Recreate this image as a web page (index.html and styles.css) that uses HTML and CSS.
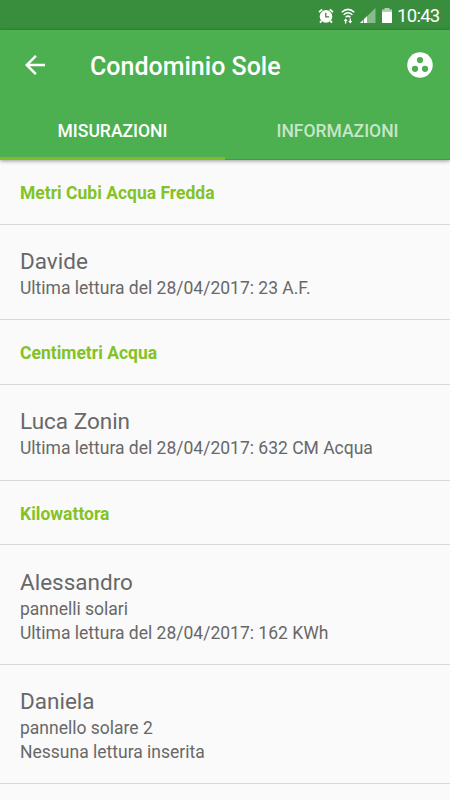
FILE: index.html
```html
<!DOCTYPE html>
<html lang="it">
<head>
    <meta charset="UTF-8">
    <meta name="viewport" content="width=device-width, initial-scale=1.0">
    <title>Condominio Sole</title>
    <link rel="stylesheet" href="styles.css">
</head>
<body>

<!-- Status bar -->
<div class="status-bar">
    <svg class="alarm" width="16" height="16" viewBox="0 0 16 16">
        <circle cx="8" cy="8.4" r="6.3" fill="#fff"/>
        <path d="M1 4.2 4.2 1.3M11.8 1.3 15 4.2M3.6 12.8 2 14.6M12.4 12.8 14 14.6" stroke="#fff" stroke-width="1.8"/>
        <path d="M7.8 4.8v4h3.4" fill="none" stroke="#388e3c" stroke-width="1.3"/>
    </svg>
    <svg class="wifi" width="14" height="16" viewBox="0 0 14 16">
        <g fill="none" stroke="#fff" stroke-width="1.5">
            <path d="M.7 4.2q6.3-5.6 12.6 0"/>
            <path d="M2.6 6.8q4.4-4 8.8 0"/>
            <path d="M4.6 9.2q2.4-2.2 4.8 0"/>
        </g>
        <path d="M4.6 10.6 6.7 13H5.3v2.4H3.9V13H2.6zM9.3 15.4 7.2 13h1.4v-2.4H10V13h1.4z" fill="#fff"/>
    </svg>
    <svg class="signal" width="16" height="15" viewBox="0 0 16 15">
        <path d="M0 15 15.5 0v15z" fill="#fff" opacity=".4"/>
        <path d="M0 15 7 8.2V15z" fill="#fff"/>
        <path d="M3.4 10v5" stroke="#388e3c" stroke-width=".8"/>
    </svg>
    <svg class="battery" width="10" height="15" viewBox="0 0 10 15">
        <path d="M2.5 0h5v1.5H10V15H0V1.5h2.5z" fill="#fff" opacity=".6"/>
        <path d="M0 4h10v11H0z" fill="#fff"/>
    </svg>
    <span class="clock">10:43</span>
</div>

<!-- Toolbar and tabs -->
<header class="app-bar">
    <div class="toolbar">
        <svg class="back" width="30" height="30" viewBox="0 0 24 24">
            <path d="M20 11H7.83l5.59-5.59L12 4l-8 8 8 8 1.41-1.41L7.83 13H20v-2z" fill="#fff"/>
        </svg>
        <h1>Condominio Sole</h1>
        <svg class="group" width="30" height="30" viewBox="0 0 24 24">
            <circle cx="12" cy="12" r="10.2" fill="#fff"/>
            <g fill="#4caf50">
                <circle cx="12" cy="8" r="2.5"/>
                <circle cx="8" cy="15" r="2.5"/>
                <circle cx="16" cy="15" r="2.5"/>
            </g>
        </svg>
    </div>
    <nav class="tabs">
        <a class="tab active">MISURAZIONI</a>
        <a class="tab">INFORMAZIONI</a>
    </nav>
</header>

<!-- Readings -->
<main class="list">
    <h2>Metri Cubi Acqua Fredda</h2>
    <div class="item">
        <h3>Davide</h3>
        <p>Ultima lettura del 28/04/2017: 23 A.F.</p>
    </div>
    <h2>Centimetri Acqua</h2>
    <div class="item">
        <h3>Luca Zonin</h3>
        <p>Ultima lettura del 28/04/2017: 632 CM Acqua</p>
    </div>
    <h2>Kilowattora</h2>
    <div class="item">
        <h3>Alessandro</h3>
        <p>pannelli solari</p>
        <p>Ultima lettura del 28/04/2017: 162 KWh</p>
    </div>
    <div class="item">
        <h3>Daniela</h3>
        <p>pannello solare 2</p>
        <p>Nessuna lettura inserita</p>
    </div>
</main>

</body>
</html>
```
FILE: styles.css
```css
* {
    box-sizing: border-box;
}

body {
    margin: 0;
    height: 800px;
    overflow: hidden;
    font-family: Roboto, "Liberation Sans", sans-serif;
    background-color: #fafafa;
    color: #686868;
}

h1, h2, h3, p {
    margin: 0;
}

/* Status bar */
.status-bar {
    display: flex;
    align-items: center;
    justify-content: flex-end;
    height: 30px;
    padding: 1px 10px 0 0;
    background-color: #388e3c;
    color: #fff;
}

.wifi {
    margin-left: 7px;
}

.signal {
    margin-left: 5px;
}

.battery {
    margin-left: 6px;
}

.clock {
    width: 43px;
    margin-left: 5px;
    font-size: 18.5px;
    line-height: 28px;
    letter-spacing: -0.7px;
}

/* Toolbar */
.app-bar {
    position: relative;
    height: 130px;
    background-color: #4caf50;
    box-shadow: 0 1px 4px rgba(0, 0, 0, 0.4);
}

.toolbar {
    display: flex;
    align-items: center;
    height: 70px;
    padding: 0 15px 0 20px;
}

.toolbar h1 {
    flex: 1;
    margin: 4px 0 0 40px;
    font-size: 25px;
    font-weight: 500;
    line-height: 30px;
    color: #fff;
}

.tabs {
    display: flex;
    height: 60px;
    border-bottom: 1px solid #2fa83a;
}

.tab {
    flex: 1;
    height: 60px;
    font-size: 17.5px;
    font-weight: 500;
    line-height: 62px;
    text-align: center;
    color: rgba(255, 255, 255, 0.7);
}

.tab.active {
    color: #fff;
    border-bottom: 3px solid #80bc29;
}

/* Readings list */
.list h2 {
    height: 64.7px;
    padding-left: 20px;
    border-bottom: 1px solid #d9d9d9;
    font-size: 17.5px;
    font-weight: 700;
    line-height: 67px;
    color: #84c225;
}

.item {
    padding: 22.5px 20px 18.3px;
    border-bottom: 1px solid #d9d9d9;
}

.item h3 {
    margin-bottom: 2px;
    font-size: 22.5px;
    font-weight: 400;
    line-height: 28px;
}

.item p {
    font-size: 17.5px;
    line-height: 23.8px;
}
```
